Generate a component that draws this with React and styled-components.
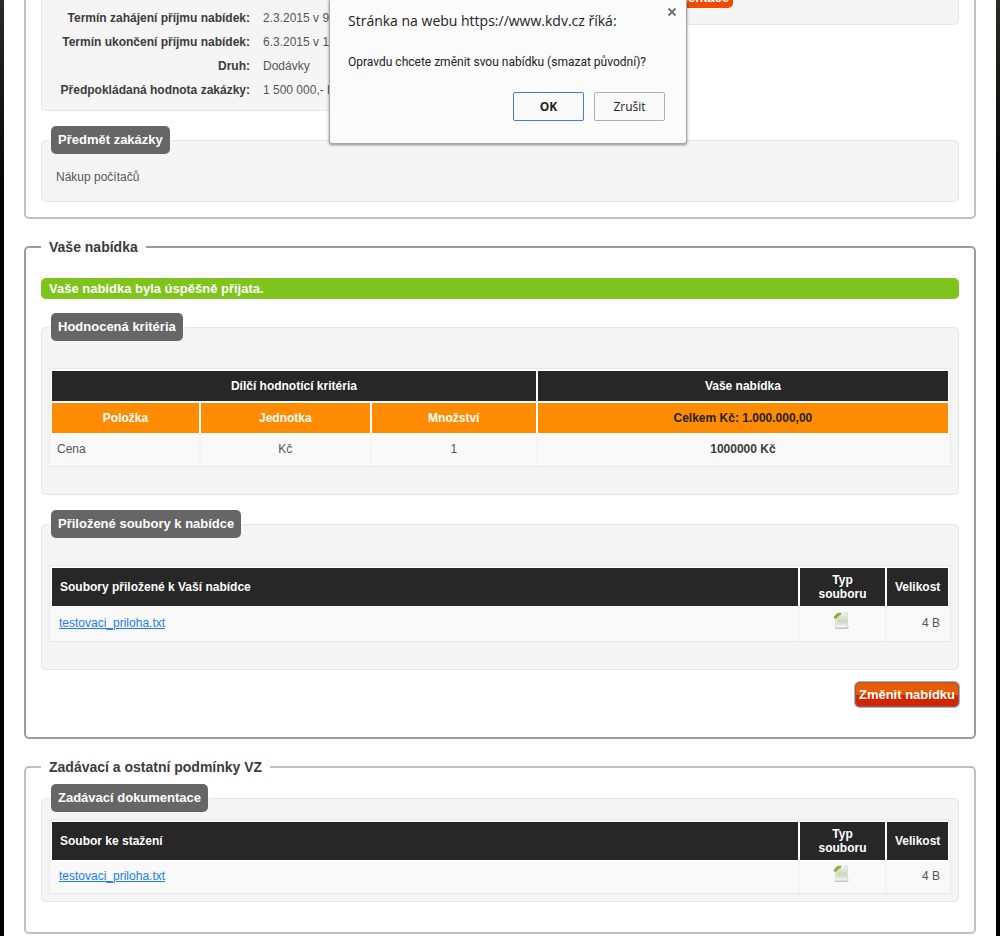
import styled, { createGlobalStyle, css } from "styled-components";

const GlobalStyle = createGlobalStyle`
  * {
    box-sizing: border-box;
  }

  body {
    background: #040300 linear-gradient(#2c2a28, #040300 200px) no-repeat;
    color: #555555;
    font-family: "Liberation Sans", Arial, sans-serif;
    font-size: 12px;
    margin: 0;
  }
`;

const Page = styled.main`
  background-color: #ffffff;
  margin: 0 4px;
  min-height: 100vh;
  padding: 0 20px 2px;
`;

const panelBox = css`
  border: 2px solid ${(props) => props.$line};
  border-radius: 5px;
  margin: 0 0 20px;
  min-width: 0;
`;

const OverviewPanel = styled.section`
  ${panelBox}
  border-radius: 0 0 5px 5px;
  border-top: 0;
  padding: 0 15px 15px;
`;

const Panel = styled.fieldset`
  ${panelBox}
  padding: 9px 15px 30px;

  &:last-child {
    margin-bottom: 0;
  }
`;

const PanelTitle = styled.legend`
  color: #3c3c3c;
  font-size: 14px;
  font-weight: bold;
  line-height: 16px;
  padding: 0 8px;
`;

const Overview = styled.div`
  align-items: start;
  display: grid;
  gap: 15px;
  grid-template-columns: 1fr 1fr;
  margin-bottom: 15px;
`;

const OverviewBox = styled.div`
  background-color: #f5f5f5;
  border: 1px solid #e5e5e5;
  border-radius: 0 0 5px 5px;
  border-top: 0;
`;

const Details = styled.dl`
  display: grid;
  gap: 0 13px;
  grid-template-columns: 208px 1fr;
  line-height: 24px;
  margin: 0;
  padding: 6px 0 8px;
`;

const DetailLabel = styled.dt`
  color: #3c3c3c;
  font-weight: bold;
  text-align: right;
`;

const DetailValue = styled.dd`
  margin: 0;
  white-space: nowrap;
`;

const Documents = styled.div`
  display: grid;
  grid-template-columns: 1fr 1fr;
  justify-items: end;
  padding-bottom: 16px;
`;

const OrangeButton = styled.button`
  background: linear-gradient(#e65c00 50%, #cf2600 50%);
  border: 0;
  border-radius: 5px;
  color: #ffffff;
  font-family: inherit;
  font-size: 13px;
  font-weight: bold;
  line-height: 25px;
  padding: 0 4px;
`;

const DocumentsButton = styled(OrangeButton)`
  background: #ee4a00;
  line-height: 20px;
  margin-top: -12px;
`;

const ChangeButton = styled(OrangeButton)`
  box-shadow: inset 0 0 0 1px #b9532d, 0 0 0 1px #8fb3ee;
`;

const Actions = styled.div`
  display: flex;
  justify-content: flex-end;
  margin-top: 12px;
`;

const GroupBox = styled.fieldset`
  background-color: #f5f5f5;
  border: 1px solid #e5e5e5;
  border-radius: 5px;
  margin: 0;
  min-width: 0;
  padding: ${(props) => (props.$roomy ? "27px 7px" : "7px")};

  & + & {
    margin-top: 15px;
  }
`;

const GroupLegend = styled.legend`
  padding: 0 2px;
`;

const GroupTitle = styled.span`
  background-color: #666666;
  border-radius: 5px;
  color: #ffffff;
  display: block;
  font-size: 13px;
  font-weight: bold;
  line-height: 28px;
  padding: 0 7px;
`;

const Subject = styled.p`
  line-height: 22px;
  margin: 0;
  padding: 5px 7px 6px;
`;

const Message = styled.p`
  background-color: #7fc41c;
  border-radius: 5px;
  color: #ffffff;
  font-size: 13px;
  font-weight: bold;
  line-height: 21px;
  margin: 14px 0;
  padding: 0 8px;
`;

const Table = styled.table`
  background-color: #f9f9f9;
  border: 1px solid #e9e9e9;
  border-spacing: 0;
  line-height: 14px;
  padding: 1px 1px 0;
  table-layout: fixed;
  width: 100%;
`;

const Column = styled.col`
  width: ${(props) => props.$width};
`;

const HeadCell = styled.th`
  background-color: ${(props) => (props.$orange ? "#ff8c00" : "#272727")};
  border: 1px solid #ffffff;
  color: ${(props) => (props.$dark ? "#222222" : "#ffffff")};
  height: ${(props) => (props.$tall ? "40px" : "32px")};
  padding: 0 8px;
  text-align: ${(props) => props.$align || "center"};
`;

const Cell = styled.td`
  border: 1px solid #f3f3f3;
  border-width: 0 1px;
  color: ${(props) => (props.$bold ? "#3c3c3c" : "inherit")};
  font-weight: ${(props) => (props.$bold ? "bold" : "normal")};
  height: ${(props) => (props.$tall ? "34px" : "32px")};
  padding: 0 5px 2px;
  text-align: ${(props) => props.$align || "center"};

  &:first-child {
    border-left-color: transparent;
  }

  &:last-child {
    border-right-color: transparent;
  }
`;

const FileCell = styled(Cell)`
  padding: 0 8px 2px 7px;
`;

const FileLink = styled.a`
  color: #1a7cf0;
`;

const Icon = styled.svg`
  display: block;
  height: 18px;
  margin: 0 auto 5px;
  width: 18px;
`;

const DialogLayer = styled.div`
  display: flex;
  justify-content: center;
  left: 0;
  padding-left: 16px;
  position: absolute;
  right: 0;
  top: 0;
`;

const Dialog = styled.div`
  background-color: #fbfbfb;
  border: 1px solid #a8a8a8;
  border-radius: 0 0 3px 3px;
  border-top: 0;
  box-shadow: 0 1px 3px rgba(0, 0, 0, 0.45);
  color: #222222;
  font-family: "Open Sans", "Noto Sans", sans-serif;
  font-size: 12px;
  padding: 2px 21px 22px 18px;
  width: 358px;
`;

const DialogHeader = styled.div`
  align-items: flex-start;
  display: flex;
  justify-content: space-between;
  margin-right: -17px;
`;

const DialogTitle = styled.h1`
  font-size: 14px;
  font-weight: normal;
  line-height: 20px;
  margin: 9px 0 0;
  white-space: nowrap;
`;

const CloseButton = styled.button`
  background: none;
  border: 0;
  display: flex;
  padding: 5px;
`;

const DialogText = styled.p`
  font-family: Roboto, "Open Sans", sans-serif;
  line-height: 20px;
  margin: 21px 0 20px;
  white-space: nowrap;
`;

const DialogButtons = styled.div`
  display: flex;
  gap: 10px;
  justify-content: flex-end;
`;

const DialogButton = styled.button`
  background-color: #fafafa;
  border: 1px solid ${(props) => (props.$primary ? "#4079e8" : "#b0b0b0")};
  border-radius: 2px;
  color: #222222;
  font-family: inherit;
  font-size: 12px;
  font-weight: ${(props) => (props.$primary ? "bold" : "normal")};
  height: 29px;
  padding: 0;
  width: 71px;
`;

const details = [
  ["Termín zahájení příjmu nabídek:", "2.3.2015 v 9:00"],
  ["Termín ukončení příjmu nabídek:", "6.3.2015 v 12:00"],
  ["Druh:", "Dodávky"],
  ["Předpokládaná hodnota zakázky:", "1 500 000,- Kč"],
];

function Group({ title, roomy, children }) {
  return (
    <GroupBox $roomy={roomy}>
      <GroupLegend>
        <GroupTitle>{title}</GroupTitle>
      </GroupLegend>
      {children}
    </GroupBox>
  );
}

function FileIcon() {
  return (
    <Icon viewBox="0 0 18 18" role="img" aria-label="Textový soubor">
      <defs>
        <linearGradient id="sheet" x1="0" y1="0" x2="0" y2="1">
          <stop offset="0" stopColor="#e4ebdc" />
          <stop offset="0.6" stopColor="#cbdabd" />
          <stop offset="1" stopColor="#e6ecdf" />
        </linearGradient>
      </defs>
      <path d="M2 15.500h11.500l2-2V16l-1 1H2z" fill="#c6c6c6" />
      <path d="M6 1h8.500v13l-1 1.500H2.500V5z" fill="#f1f2ef" stroke="#dcdeda" />
      <path d="M6.500 3H14v10.500H3.500V6z" fill="url(#sheet)" />
      <path d="M1 6.500V4.500L4.500 1H8v1.500L3.500 6.500z" fill="#79ac2e" />
      <path d="M3.500 5.500L7 2.500" stroke="#b5d878" />
    </Icon>
  );
}

function FileTable({ title, tall }) {
  return (
    <Table>
      <colgroup>
        <Column />
        <Column $width="87px" />
        <Column $width="63px" />
      </colgroup>
      <thead>
        <tr>
          <HeadCell $tall $align="left">
            {title}
          </HeadCell>
          <HeadCell $tall>Typ souboru</HeadCell>
          <HeadCell $tall $align="right">
            Velikost
          </HeadCell>
        </tr>
      </thead>
      <tbody>
        <tr>
          <FileCell $tall={tall} $align="left">
            <FileLink href="#testovaci_priloha">testovaci_priloha.txt</FileLink>
          </FileCell>
          <FileCell $tall={tall}>
            <FileIcon />
          </FileCell>
          <FileCell $tall={tall} $align="right">
            4 B
          </FileCell>
        </tr>
      </tbody>
    </Table>
  );
}

function CriteriaTable() {
  return (
    <Table>
      <colgroup>
        <Column $width="16.6%" />
        <Column $width="19%" />
        <Column $width="18.5%" />
        <Column />
      </colgroup>
      <thead>
        <tr>
          <HeadCell colSpan={3}>Dílčí hodnotící kritéria</HeadCell>
          <HeadCell>Vaše nabídka</HeadCell>
        </tr>
        <tr>
          <HeadCell $orange>Položka</HeadCell>
          <HeadCell $orange>Jednotka</HeadCell>
          <HeadCell $orange>Množství</HeadCell>
          <HeadCell $orange $dark>
            Celkem Kč: 1.000.000,00
          </HeadCell>
        </tr>
      </thead>
      <tbody>
        <tr>
          <Cell $align="left">Cena</Cell>
          <Cell>Kč</Cell>
          <Cell>1</Cell>
          <Cell $bold>1000000 Kč</Cell>
        </tr>
      </tbody>
    </Table>
  );
}

function ConfirmDialog() {
  return (
    <DialogLayer>
      <Dialog role="dialog" aria-labelledby="dialog-title">
        <DialogHeader>
          <DialogTitle id="dialog-title">
            Stránka na webu https://www.kdv.cz říká:
          </DialogTitle>
          <CloseButton type="button" aria-label="Zavřít">
            <svg width="10" height="10" viewBox="0 0 10 10">
              <path
                d="M1.500 1.500l7 7M8.500 1.500l-7 7"
                stroke="#707070"
                strokeWidth="2"
              />
            </svg>
          </CloseButton>
        </DialogHeader>
        <DialogText>
          Opravdu chcete změnit svou nabídku (smazat původní)?
        </DialogText>
        <DialogButtons>
          <DialogButton type="button" $primary>
            OK
          </DialogButton>
          <DialogButton type="button">Zrušit</DialogButton>
        </DialogButtons>
      </Dialog>
    </DialogLayer>
  );
}

function App() {
  return (
    <>
      <GlobalStyle />
      <Page>
        <OverviewPanel $line="#c0c0c0">
          <Overview>
            <OverviewBox>
              <Details>
                {details.map(([label, value]) => [
                  <DetailLabel key={label}>{label}</DetailLabel>,
                  <DetailValue key={value}>{value}</DetailValue>,
                ])}
              </Details>
            </OverviewBox>
            <OverviewBox>
              <Documents>
                <DocumentsButton type="button">Dokumentace</DocumentsButton>
              </Documents>
            </OverviewBox>
          </Overview>
          <Group title="Předmět zakázky">
            <Subject>Nákup počítačů</Subject>
          </Group>
        </OverviewPanel>

        <Panel $line="#9c9c9c">
          <PanelTitle>Vaše nabídka</PanelTitle>
          <Message>Vaše nabídka byla úspěšně přijata.</Message>
          <Group title="Hodnocená kritéria" roomy>
            <CriteriaTable />
          </Group>
          <Group title="Přiložené soubory k nabídce" roomy>
            <FileTable title="Soubory přiložené k Vaší nabídce" tall />
          </Group>
          <Actions>
            <ChangeButton type="button">Změnit nabídku</ChangeButton>
          </Actions>
        </Panel>

        <Panel $line="#c0c0c0">
          <PanelTitle>Zadávací a ostatní podmínky VZ</PanelTitle>
          <Group title="Zadávací dokumentace">
            <FileTable title="Soubor ke stažení" />
          </Group>
        </Panel>
      </Page>
      <ConfirmDialog />
    </>
  );
}

export default App;
